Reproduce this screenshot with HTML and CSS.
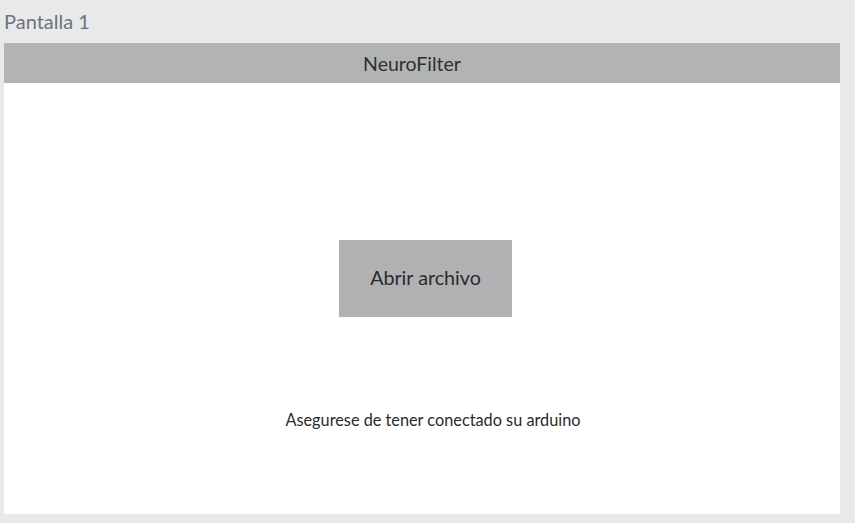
FILE: index.html
```html
<!DOCTYPE html>
<html>
<head>
<meta charset="utf-8">
<link rel="stylesheet" href="styles.css">
</head>
<body>
<div class="title">Pantalla 1</div>
<div class="panel">
  <div class="header">NeuroFilter</div>
  <div class="content">
    <div class="button">Abrir archivo</div>
    <div class="note">Asegurese de tener conectado su arduino</div>
  </div>
</div>
</body>
</html>
```
FILE: styles.css
```css
html, body {
  margin: 0;
  padding: 0;
}
body {
  width: 855px;
  height: 523px;
  background: #e8e9eb;
  font-family: Lato, "Noto Sans", sans-serif;
  overflow: hidden;
}
.title {
  height: 43px;
  box-sizing: border-box;
  padding: 9px 0 0 4px;
  font-size: 20px;
  color: #6f7378;
  line-height: 24px;
}
.panel {
  margin-left: 4px;
  width: 836px;
  height: 471px;
  background: #ffffff;
  display: flex;
  flex-direction: column;
}
.header {
  height: 40px;
  background: #b1b4b3;
  display: flex;
  align-items: center;
  justify-content: center;
  padding-right: 20px;
  font-size: 19.5px;
  color: #2e2f31;
}
.content {
  flex: 1;
  display: flex;
  flex-direction: column;
  align-items: center;
}
.button {
  margin-top: 157px;
  margin-left: 7px;
  width: 173px;
  height: 77px;
  padding-bottom: 2px;
  box-sizing: border-box;
  background: #b1b1b4;
  display: flex;
  align-items: center;
  justify-content: center;
  font-size: 19.7px;
  color: #2a2b2d;
}
.note {
  margin-top: 92px;
  margin-left: 22px;
  font-size: 16.3px;
  color: #2a2b2d;
  line-height: 22px;
}
```
